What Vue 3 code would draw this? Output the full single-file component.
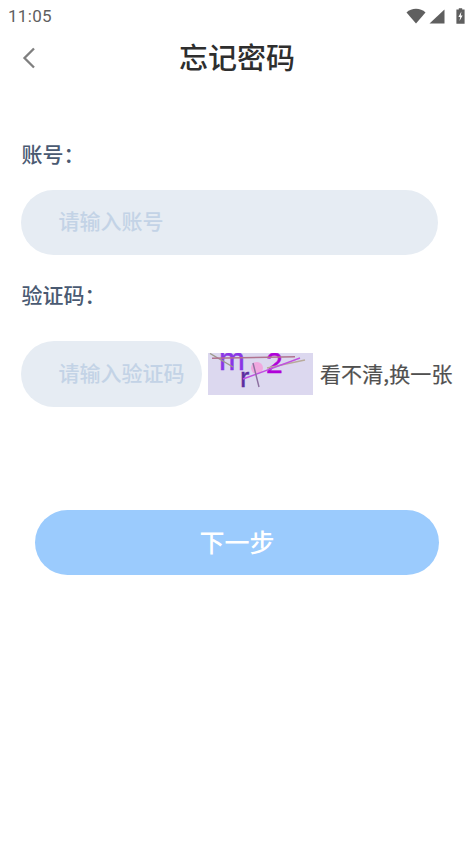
<script setup>
</script>

<template>
  <div class="page">
    <div class="status">
      <span class="time">11:05</span>
      <div class="status-icons">
        <svg width="20" height="16" viewBox="0 0 20 16"><path d="M0.5 4.5C5.5 -0.5 14.5 -0.5 19.5 4.5L10 15.5Z" fill="#5f5f5f"/></svg>
        <svg class="signal" width="16" height="16" viewBox="0 0 16 16"><path d="M15.5 1.5V15.5H0.5Z" fill="#5f5f5f"/></svg>
        <svg class="battery" width="9" height="16" viewBox="0 0 9 16"><path d="M2.8 0.3H6.2V1.6H8.6V15.8H0.4V1.6H2.8Z" fill="#5f5f5f"/><path d="M5.4 3.6L2.4 9H4.2L3.5 13L6.6 7.4H4.8Z" fill="#fff"/></svg>
      </div>
    </div>
    <header class="nav">
      <svg class="back" width="14" height="24" viewBox="0 0 14 24"><path d="M12 2.5L2.5 12L12 21.5" fill="none" stroke="#7f7f7f" stroke-width="2.3"/></svg>
      <h1 class="title">忘记密码</h1>
    </header>
    <main class="form">
      <label class="label first">账号：</label>
      <div class="field full">请输入账号</div>
      <label class="label second">验证码：</label>
      <div class="code-row">
        <div class="field short">请输入验证码</div>
        <svg class="captcha" width="105" height="42" viewBox="0 0 105 42">
          <rect width="105" height="42" fill="#dcd8ef"/>
          <circle cx="49" cy="15" r="6" fill="#f3a0dc" opacity=".85"/>
          <text x="11" y="16.5" class="cap m">m</text>
          <text x="32" y="34" class="cap r">r</text>
          <text x="58" y="20" class="cap two">2</text>
          <path d="M2 0.5L25 14" stroke="#9c9a8a" stroke-width="1.4"/>
          <path d="M4 5.3L87 3.7" stroke="#b0738f" stroke-width="1.4"/>
          <path d="M59 15L97 7" stroke="#b8ab9c" stroke-width="1.3"/>
          <path d="M35 26L92 5" stroke="#c050e0" stroke-width="1.4"/>
          <path d="M45 10L51 34" stroke="#8d6fa0" stroke-width="1.4"/>
        </svg>
        <span class="refresh">看不清,换一张</span>
      </div>
      <button class="next" type="button">下一步</button>
    </main>
  </div>
</template>

<style scoped>
.page {
  width: 474px;
  height: 844px;
  background: #fff;
  overflow: hidden;
  font-family: "Noto Sans CJK SC", "Noto Sans", sans-serif;
}
.status {
  height: 32px;
  display: flex;
  align-items: center;
  justify-content: space-between;
  padding: 0 9px 0 8px;
}
.time {
  font-family: Roboto, sans-serif;
  font-size: 17px;
  color: #5f5f5f;
  letter-spacing: 0.3px;
}
.status-icons {
  display: flex;
  align-items: center;
}
.signal {
  margin-left: 3px;
}
.battery {
  margin-left: 11px;
}
.nav {
  height: 52px;
  padding-bottom: 4px;
  box-sizing: border-box;
  position: relative;
  display: flex;
  align-items: center;
  justify-content: center;
}
.back {
  position: absolute;
  left: 22px;
  top: 14px;
}
.title {
  margin: 0;
  font-size: 29px;
  line-height: 48px;
  font-weight: 500;
  color: #2e2e2e;
}
.form {
  padding: 0 0 0 21px;
}
.label {
  display: block;
  margin-left: 0.6px;
  font-size: 21px;
  line-height: 30px;
  font-weight: 500;
  color: #4a5a72;
}
.first {
  margin-top: 54px;
}
.second {
  margin-top: 24px;
}
.field {
  height: 65px;
  border-radius: 33px;
  background: #e6ecf3;
  color: #c3d3e6;
  font-size: 21px;
  font-weight: 500;
  line-height: 61px;
  padding-left: 37.6px;
  box-sizing: border-box;
  white-space: nowrap;
}
.full {
  width: 417px;
  margin-top: 22px;
}
.code-row {
  display: flex;
  align-items: center;
  margin-top: 32px;
  height: 66px;
}
.short {
  width: 181px;
  height: 66px;
  line-height: 62px;
}
.captcha {
  margin-left: 6px;
  flex: none;
}
.cap {
  font-family: "Liberation Sans", sans-serif;
}
.m {
  font-size: 31px;
  fill: #8a35e6;
  stroke: #8a35e6;
  stroke-width: 0.5px;
}
.r {
  font-size: 28px;
  fill: #5b2ea0;
  stroke: #5b2ea0;
  stroke-width: 0.4px;
}
.two {
  font-size: 30px;
  fill: #b000d8;
  stroke: #b000d8;
  stroke-width: 0.5px;
}
.refresh {
  margin-left: 7px;
  padding-bottom: 2px;
  font-size: 21px;
  font-weight: 400;
  letter-spacing: 0.1px;
  color: #505050;
  -webkit-text-stroke: 0.2px #505050;
  white-space: nowrap;
}
.next {
  display: block;
  width: 404px;
  height: 65px;
  margin: 103px 0 0 14px;
  border: 0;
  border-radius: 33px;
  background: #9bcbfd;
  color: #fff;
  font-family: inherit;
  font-size: 25px;
  font-weight: 500;
  padding: 0 0 4px;
}
</style>
